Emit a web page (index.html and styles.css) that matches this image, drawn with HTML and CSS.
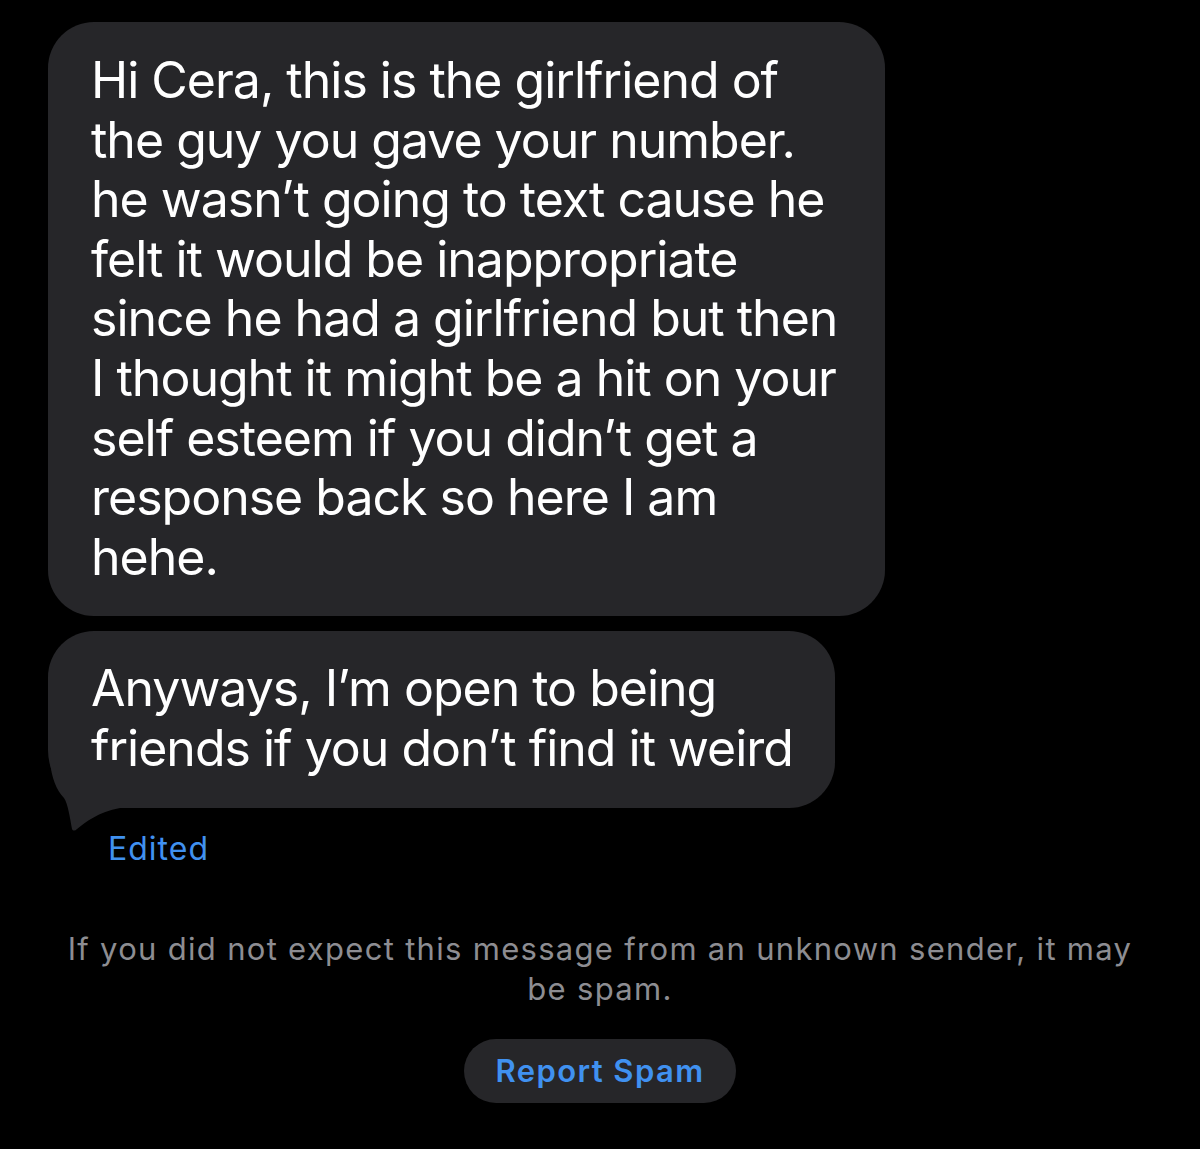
FILE: index.html
```
<!DOCTYPE html>
<html lang="en">
<head>
    <meta charset="UTF-8">
    <meta name="viewport" content="width=device-width, initial-scale=1.0">
    <title>Messages</title>
    <link rel="stylesheet" href="styles.css">
</head>
<body>
    <div class="thread">
        <div class="bubble">
            Hi Cera, this is the girlfriend of<br>
            the guy you gave your number.<br>
            he wasn’t going to text cause he<br>
            felt it would be inappropriate<br>
            since he had a girlfriend but then<br>
            I thought it might be a hit on your<br>
            self esteem if you didn’t get a<br>
            response back so here I am<br>
            hehe.
        </div>
        <div class="bubble last">
            Anyways, I’m open to being<br>
            friends if you don’t find it weird
            <svg class="tail" viewBox="0 0 72 72" width="72" height="72">
                <path d="M2,0 C3,16 8,30 16,38 C20,44 22,58 24,69 C25,71 27,71 29,69 C38,62 50,52 72,48 L72,0 Z" fill="#262629"/>
            </svg>
        </div>
        <div class="edited">Edited</div>
    </div>

    <p class="notice">If you did not expect this message from an unknown sender, it may<br>be spam.</p>

    <div class="actions">
        <button class="report">Report Spam</button>
    </div>
</body>
</html>
```
FILE: styles.css
```
body {
    margin: 0;
    background-color: #000;
    font-family: Inter, "Noto Sans", sans-serif;
    color: #fff;
}
.thread {
    padding: 22px 0 0 48px;
}
.bubble {
    position: relative;
    width: fit-content;
    background-color: #262629;
    border-radius: 46px;
    padding: 29px 48px 29px 43px;
    font-size: 50px;
    line-height: 59.6px;
    letter-spacing: -1px;
    margin-bottom: 15px;
}
.bubble.last {
    margin-bottom: 0;
    padding-top: 28px;
    padding-bottom: 29px;
    padding-right: 42px;
    border-bottom-left-radius: 58px;
}
.tail {
    position: absolute;
    left: 0;
    bottom: -24px;
    display: block;
}
.edited {
    margin: 21px 0 0 60px;
    font-size: 32px;
    line-height: 40px;
    letter-spacing: 1px;
    color: #4091f0;
}
.notice {
    margin: 60px 0 0;
    text-align: center;
    font-size: 31px;
    line-height: 40px;
    letter-spacing: 1.3px;
    color: #8d8d92;
}
.actions {
    display: flex;
    justify-content: center;
    margin-top: 30px;
}
.report {
    height: 64px;
    padding: 0 32px;
    border: none;
    border-radius: 32px;
    background-color: #262629;
    color: #4091f0;
    font-family: Inter, "Noto Sans", sans-serif;
    font-size: 31px;
    font-weight: 600;
    letter-spacing: 1.4px;
}
```
